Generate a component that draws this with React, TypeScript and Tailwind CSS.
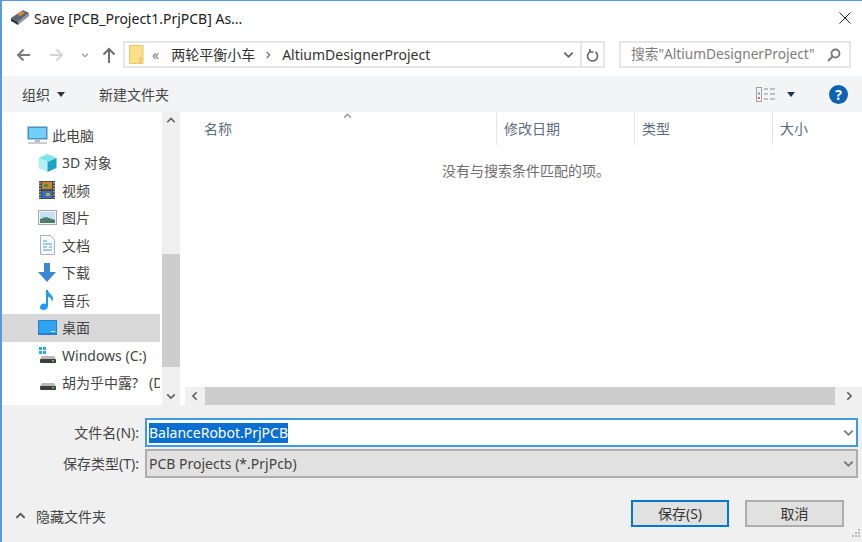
import React from 'react';

const Chevron = ({ dir, className }: { dir: 'up' | 'down' | 'left' | 'right'; className?: string }) => {
	const d = {
		up: 'M1.5 7.5 6 3l4.5 4.5',
		down: 'M1.5 4 6 8.5 10.5 4',
		left: 'M8 1.5 3.5 6 8 10.5',
		right: 'M4 1.5 8.5 6 4 10.5',
	}[dir];
	return (
		<svg width="12" height="12" viewBox="0 0 12 12" className={className} fill="none" stroke="currentColor" strokeWidth="2">
			<path d={d} />
		</svg>
	);
};

const PcIcon = () => (
	<svg width="21" height="18" viewBox="0 0 21 18">
		<rect x="0.5" y="0.5" width="20" height="13" fill="#4a8fc4" />
		<rect x="2" y="2" width="17" height="10" fill="#6fd0fb" />
		<rect x="8" y="14" width="5" height="2" fill="#b0b8c0" />
		<rect x="1" y="16" width="19" height="2" fill="#c8ced4" />
	</svg>
);
const CubeIcon = () => (
	<svg width="19" height="18" viewBox="0 0 19 18">
		<path d="M9.500 0 18.500 4 9.500 8 .5 4z" fill="#7fe3ea" />
		<path d="M.5 4 9.500 8v10l-9-4z" fill="#b5f0f2" />
		<path d="M18.500 4 9.500 8v10l9-4z" fill="#18a5c9" />
	</svg>
);
const FilmIcon = () => (
	<svg width="16" height="18" viewBox="0 0 16 18">
		<rect width="16" height="18" fill="#4a4a4a" />
		<path d="M1 1v16M15 1v16" stroke="#cfcfcf" strokeWidth="1.200" strokeDasharray="1.500 1.500" />
		<rect x="3" y="1" width="10" height="7" fill="#c9842f" />
		<rect x="5" y="3" width="4" height="3" fill="#3f8f4f" />
		<rect x="3" y="10" width="10" height="7" fill="#2f6fc9" />
		<rect x="7" y="12" width="4" height="3" fill="#d1a13a" />
	</svg>
);
const PictureIcon = () => (
	<svg width="19" height="15" viewBox="0 0 19 15">
		<rect x="0.5" y="0.5" width="18" height="14" fill="#f2f2f2" stroke="#a8a8a8" />
		<rect x="2" y="2" width="15" height="11" fill="#c6dff2" />
		<path d="M2 9 8 7l9 3v3H2z" fill="#4c7f6a" />
	</svg>
);
const DocIcon = () => (
	<svg width="15" height="20" viewBox="0 0 15 20">
		<path d="M.5.5h10l4 4v15H.5z" fill="#f6f8fa" stroke="#a9b0b6" />
		<path d="M3 6h4M3 9h9M3 12h4M9 12h3M3 15h9" stroke="#4f9ad0" strokeWidth="1.2" />
	</svg>
);
const DownIcon = () => (
	<svg width="18" height="19" viewBox="0 0 18 19">
		<path d="M6 0h6v9h6l-9 10L0 9h6z" fill="#3a87d4" />
	</svg>
);
const MusicIcon = () => (
	<svg width="14" height="20" viewBox="0 0 14 20">
		<path d="M6 0h2c0 4 5 4 5 9 0 1-.5 2-1 3 0-3-2-5-4-5.500V16c0 2.500-2 4-4.500 4S0 18.800 0 17s2-3.500 4-3.500c1 0 1.500.2 2 .5z" fill="#1f9cf0" />
	</svg>
);
const DesktopIcon = () => (
	<svg width="19" height="15" viewBox="0 0 19 15">
		<rect width="19" height="15" fill="#2a7fc9" />
		<rect x="1" y="1" width="17" height="12" fill="#2ea4f5" />
		<rect x="13" y="11" width="4" height="1" fill="#cfeafc" />
	</svg>
);
const DriveIcon = ({ win }: { win?: boolean }) => (
	<svg width="17" height="17" viewBox="0 0 17 17">
		{win && <path d="M0 0h3v3H0zM4 0h3v3H4zM0 4h3v3H0zM4 4h3v3H4z" fill="#29a8ea" />}
		<path d="M3 9h12l2 3H1z" fill="#b9b9b9" />
		<rect x="1" y="12" width="16" height="4" rx="1" fill="#3d3d3d" />
		<rect x="13" y="13" width="2" height="1.500" fill="#5fd35f" />
	</svg>
);

const navItems: { label: string; icon: React.ReactNode; pad: string; active?: boolean }[] = [
	{ label: '此电脑', icon: <PcIcon />, pad: 'pl-[25px]' },
	{ label: '3D 对象', icon: <CubeIcon />, pad: 'pl-[35px]' },
	{ label: '视频', icon: <FilmIcon />, pad: 'pl-[35px]' },
	{ label: '图片', icon: <PictureIcon />, pad: 'pl-[35px]' },
	{ label: '文档', icon: <DocIcon />, pad: 'pl-[35px]' },
	{ label: '下载', icon: <DownIcon />, pad: 'pl-[35px]' },
	{ label: '音乐', icon: <MusicIcon />, pad: 'pl-[35px]' },
	{ label: '桌面', icon: <DesktopIcon />, pad: 'pl-[35px]', active: true },
	{ label: 'Windows (C:)', icon: <DriveIcon win />, pad: 'pl-[35px]' },
	{ label: '胡为乎中露?   (D', icon: <DriveIcon />, pad: 'pl-[35px]' },
];

const App = () => {
	return (
		<div
			className="w-[862px] h-[542px] overflow-hidden flex flex-col bg-white border-t border-l-2 border-[#5a9ad6] text-[14px] text-[#333]"
			style={{ fontFamily: '"Noto Sans", "Noto Sans CJK SC", sans-serif' }}
		>
			{/* title bar */}
			<div className="h-[34px] shrink-0 flex items-center pl-[8px] pr-[11px]">
				<svg width="20" height="18" viewBox="0 0 20 18" className="mr-[4px]">
					<path d="M1 9 13 1l6 3-11 9z" fill="#5c6672" />
					<path d="M7 5l5-3 3 2-5 3z" fill="#d98a3c" />
					<path d="M1 9l7 4v3l-7-4z" fill="#30363d" />
					<path d="M8 13l11-9v3L8 16z" fill="#8a94a0" />
				</svg>
				<span className="text-[#222] text-[14px]">Save [PCB_Project1.PrjPCB] As...</span>
				<svg width="12" height="12" viewBox="0 0 12 12" className="ml-auto" stroke="#222" strokeWidth="1">
					<path d="M.5.500l11 11M11.500.500l-11 11" />
				</svg>
			</div>

			{/* nav row */}
			<div className="h-[41px] shrink-0 flex items-start pt-[6px]">
				<div className="w-[121px] h-[27px] shrink-0 flex items-center pl-[14px]">
					<svg width="14" height="14" viewBox="0 0 14 14" fill="none" stroke="#7a7a7a" strokeWidth="2">
						<path d="M14 7H2M7.500 1.500 2 7l5.500 5.500" />
					</svg>
					<svg width="14" height="14" viewBox="0 0 14 14" fill="none" stroke="#d6d6d6" strokeWidth="2" className="ml-[20px]">
						<path d="M0 7h12M6.500 1.500 12 7l-5.500 5.500" />
					</svg>
					<Chevron dir="down" className="text-[#9a9a9a] w-[8px] h-[8px] ml-[17px]" />
					<svg width="14" height="16" viewBox="0 0 14 16" fill="none" stroke="#6e6e6e" strokeWidth="2" className="ml-[13px]">
						<path d="M7 16V2M1.500 7.500 7 2l5.500 5.500" />
					</svg>
				</div>
				<div className="w-[482px] h-[27px] border-2 border-[#e6e6e6] flex items-center">
					<svg width="15" height="19" viewBox="0 0 15 19" className="ml-[4px]">
						<path d="M.5.500h13.500v18H.5z" fill="#fbe08a" stroke="#e8c96a" />
						<path d="M10 12h4v6h-4z" fill="#f2cf6c" />
					</svg>
					<span className="ml-[8px] text-[#777]">«</span>
					<span className="ml-[12px] text-[#333]">两轮平衡小车</span>
					<Chevron dir="right" className="text-[#777] w-[8px] h-[8px] ml-[9px]" />
					<span className="ml-[10px] text-[#333]">AltiumDesignerProject</span>
					<Chevron dir="down" className="text-[#666] w-[11px] h-[11px] ml-auto mr-[6px]" />
					<div className="w-[23px] h-full border-l-2 border-[#e6e6e6] flex items-center justify-center">
						<svg width="13" height="14" viewBox="0 0 13 14" fill="none" stroke="#666" strokeWidth="1.600">
							<path d="M9.500 4a5 5 0 1 1-5-.5M4 1v3h3.500" />
						</svg>
					</div>
				</div>
				<div className="w-[232px] h-[27px] ml-[14px] border-2 border-[#e6e6e6] flex items-center pl-[10px] text-[#7d7d7d] text-[13.700px]">
					<span>搜索"AltiumDesignerProject"</span>
					<svg width="14" height="14" viewBox="0 0 14 14" fill="none" stroke="#777" strokeWidth="1.800" className="ml-auto mr-[8px]">
						<circle cx="8.500" cy="5.500" r="4" />
						<path d="M5.500 8.500 1 13" />
					</svg>
				</div>
			</div>

			{/* toolbar */}
			<div className="h-[36px] shrink-0 bg-[#f3f4f6] flex items-center pl-[20px] pr-[14px] text-[#444]">
				<span>组织</span>
				<span className="ml-[7px] w-0 h-0 border-x-[4px] border-x-transparent border-t-[5px] border-t-[#333]" />
				<span className="ml-[34px]">新建文件夹</span>
				<svg width="20" height="15" viewBox="0 0 20 15" className="ml-auto" fill="none">
					<rect x=".5" y=".5" width="5" height="14" stroke="#a0a0a0" />
					<path d="M8 2h4M14 2h5M8 7h4M14 7h5M8 12h4M14 12h5" stroke="#8a8a8a" />
					<rect x="2" y="5.500" width="2" height="2" fill="#5c9ad0" />
					<rect x="2" y="10" width="2" height="2" fill="#d06a5c" />
				</svg>
				<span className="ml-[11px] w-0 h-0 border-x-[4px] border-x-transparent border-t-[5px] border-t-[#1f3550]" />
				<span className="ml-[34px] w-[19px] h-[19px] rounded-full bg-[#0d62b8] text-white text-[14px] font-bold flex items-center justify-center">?</span>
			</div>

			{/* main */}
			<div className="h-[293px] shrink-0 flex">
				<div className="w-[158px] shrink-0 pt-[9.500px] overflow-hidden">
					{navItems.map((item) => (
						<div
							key={item.label}
							className={`h-[27.500px] flex items-center whitespace-pre text-[#444] ${item.pad} ${item.active ? 'bg-[#d9d9d9]' : ''}`}
						>
							<span className="w-[24px] shrink-0 flex justify-center -ml-[2px] mr-[3px]">{item.icon}</span>
							<span>{item.label}</span>
						</div>
					))}
				</div>
				<div className="w-[18px] shrink-0 ml-[2px] bg-[#f0f0f0] flex flex-col items-center">
					<div className="h-[18px] flex items-center justify-center text-[#606060]">
						<Chevron dir="up" className="w-[10px] h-[10px]" />
					</div>
					<div className="h-[124px]" />
					<div className="w-full h-[113px] bg-[#cdcdcd]" />
					<div className="h-[20px]" />
					<div className="h-[18px] flex items-center justify-center text-[#606060]">
						<Chevron dir="down" className="w-[10px] h-[10px]" />
					</div>
				</div>
				<div className="flex-1 min-w-0 flex flex-col pl-[3px]">
					<div className="h-[33px] shrink-0 flex relative text-[#5d6d7d]">
						<Chevron dir="up" className="absolute left-[160px] top-[0px] w-[9px] h-[9px] text-[#999]" />
						<div className="w-[314px] pl-[21px] flex items-center border-r border-[#e5e5e5]">名称</div>
						<div className="w-[138px] pl-[7px] flex items-center border-r border-[#e5e5e5]">修改日期</div>
						<div className="w-[138px] pl-[7px] flex items-center border-r border-[#e5e5e5]">类型</div>
						<div className="flex-1 pl-[7px] flex items-center">大小</div>
					</div>
					<div className="flex-1 pl-[259px] pt-[15px] text-[#6d6d6d]">没有与搜索条件匹配的项。</div>
					<div className="h-[18px] shrink-0 ml-[2px] bg-[#f0f0f0] flex items-center text-[#606060]">
						<div className="w-[20px] flex justify-center">
							<Chevron dir="left" className="w-[10px] h-[10px]" />
						</div>
						<div className="w-[630px] h-full bg-[#cdcdcd]" />
						<div className="flex-1 flex justify-center">
							<Chevron dir="right" className="w-[10px] h-[10px]" />
						</div>
					</div>
				</div>
			</div>

			{/* footer */}
			<div className="flex-1 bg-[#f0f0f0] relative pl-[1px] text-[#444]">
				<div className="flex items-center pt-[13px]">
					<label className="w-[136px] text-right">文件名(N):</label>
					<div className="ml-[6px] w-[713px] h-[29px] bg-white border-2 border-[#3f9ae6] flex items-center pl-[2px]">
						<span className="bg-[#0a6fd0] text-white leading-[20px]">BalanceRobot.PrjPCB</span>
						<Chevron dir="down" className="w-[11px] h-[11px] ml-auto mr-[2px] text-[#777]" />
					</div>
				</div>
				<div className="flex items-center mt-[2px]">
					<label className="w-[136px] text-right">保存类型(T):</label>
					<div className="ml-[6px] w-[713px] h-[29px] bg-[#e1e1e1] border-2 border-[#adadad] flex items-center pl-[2px] text-[#444]">
						<span>PCB Projects (*.PrjPcb)</span>
						<Chevron dir="down" className="w-[11px] h-[11px] ml-auto mr-[2px] text-[#777]" />
					</div>
				</div>
				<div className="flex items-start mt-[22px] pr-[18px]">
					<div className="flex items-center pl-[12px] pt-[6px]">
						<Chevron dir="up" className="w-[11px] h-[11px] text-[#555]" />
						<span className="ml-[10px]">隐藏文件夹</span>
					</div>
					<button className="ml-auto w-[98px] h-[27px] bg-[#e1e1e1] border-2 border-[#0078d7] text-[#333]">保存(S)</button>
					<button className="ml-[16px] w-[99px] h-[27px] bg-[#e1e1e1] border-2 border-[#adadad] text-[#333]">取消</button>
				</div>
				<svg width="12" height="12" viewBox="0 0 12 12" className="absolute right-[1px] bottom-[1px]" fill="#bdbdbd">
					<path d="M9 0h2v2H9zM6 3h2v2H6zM9 3h2v2H9zM3 6h2v2H3zM6 6h2v2H6zM9 6h2v2H9z" />
				</svg>
			</div>
		</div>
	);
};

export default App;
